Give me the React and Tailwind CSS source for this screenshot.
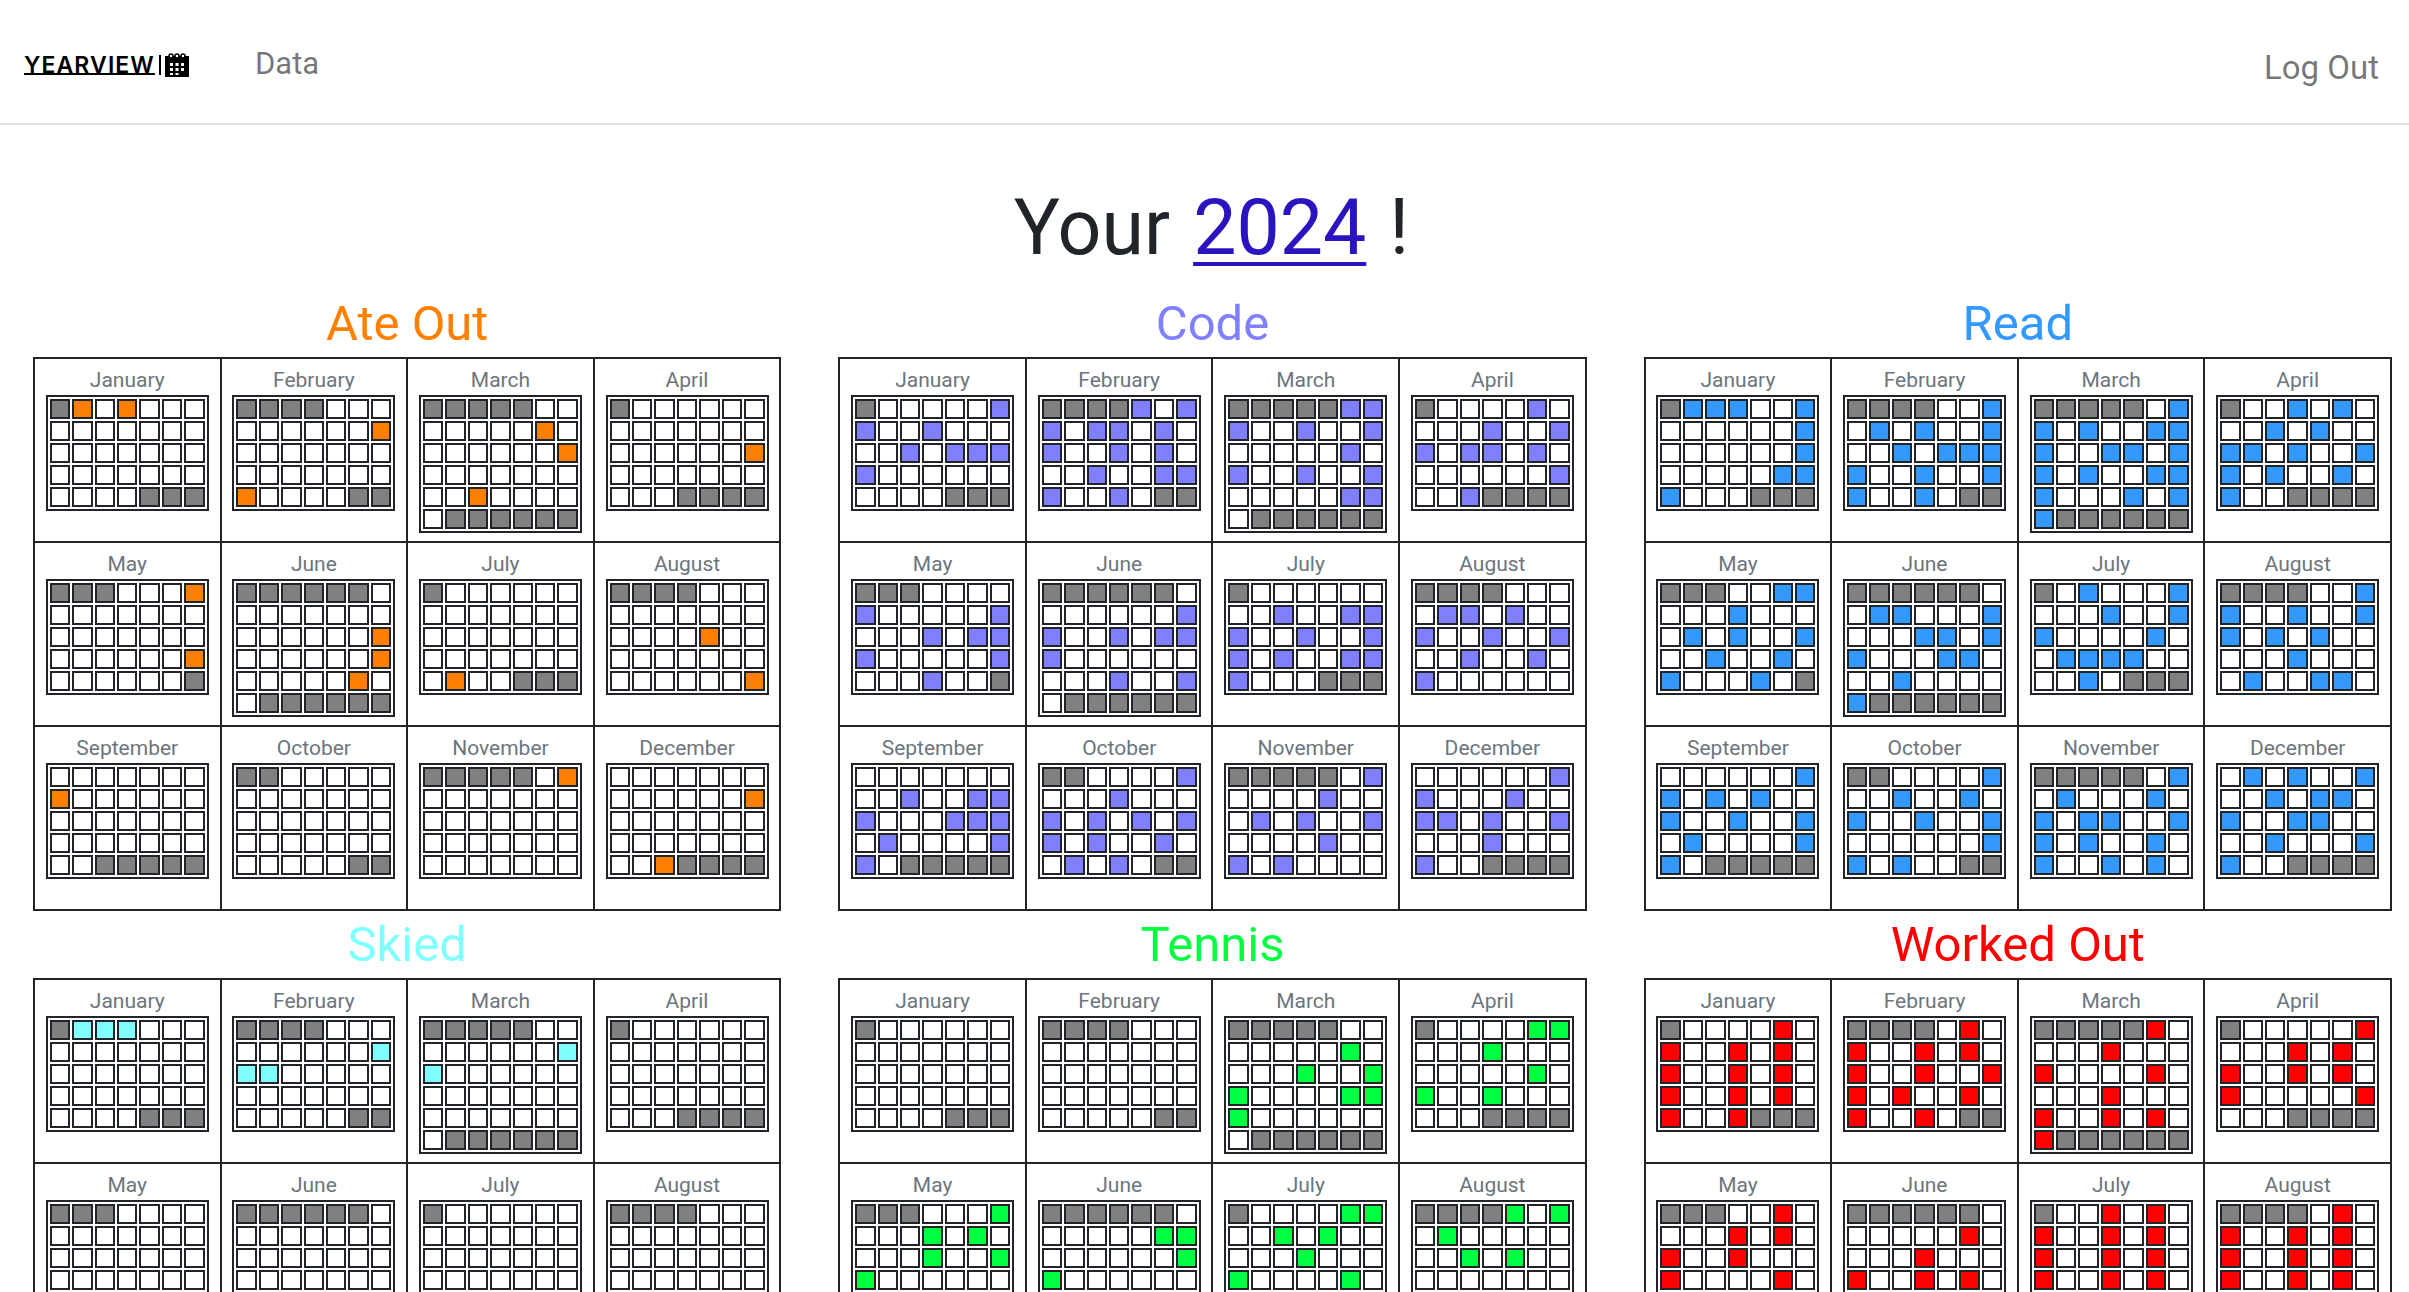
const FONT = "font-['Roboto',sans-serif]"

const MONTHS = [
  ['January', 1, 31], ['February', 4, 29], ['March', 5, 31], ['April', 1, 30],
  ['May', 3, 31], ['June', 6, 30], ['July', 1, 31], ['August', 4, 31],
  ['September', 0, 30], ['October', 2, 31], ['November', 5, 30], ['December', 0, 31],
]

// marks are written as row * 10 + col
const ACTIVITIES = [
  {
    name: 'Ate Out', title: 'text-[#ff8000]', fill: 'bg-[#ff8000]',
    marks: [[1, 3], [16, 40], [15, 26, 42], [26], [6, 36], [26, 36, 45], [41], [24, 46], [10], [], [6], [16, 42]],
  },
  {
    name: 'Code', title: 'text-[#8080ff]', fill: 'bg-[#8080ff]',
    marks: [
      [6, 10, 13, 22, 24, 25, 26, 30],
      [4, 6, 10, 12, 13, 15, 20, 23, 25, 32, 35, 36, 40, 43],
      [5, 6, 10, 13, 16, 25, 30, 33, 36, 45, 46],
      [5, 13, 16, 20, 22, 23, 25, 36, 42],
      [10, 16, 23, 25, 26, 30, 36, 43],
      [16, 20, 23, 25, 26, 30, 43, 46],
      [12, 15, 16, 20, 23, 26, 30, 32, 35, 36, 40],
      [11, 12, 14, 20, 23, 26, 32, 35, 40],
      [12, 15, 16, 20, 24, 25, 26, 31, 36, 40],
      [6, 13, 20, 22, 24, 26, 30, 32, 35, 41, 43],
      [6, 14, 21, 23, 26, 34, 40, 42],
      [6, 10, 14, 20, 21, 23, 26, 33, 40],
    ],
  },
  {
    name: 'Read', title: 'text-[#3399ff]', fill: 'bg-[#3399ff]',
    marks: [
      [1, 2, 3, 6, 16, 26, 35, 36, 40],
      [6, 11, 13, 16, 22, 24, 25, 26, 30, 33, 36, 40, 43],
      [6, 10, 12, 15, 16, 20, 23, 24, 26, 30, 32, 35, 36, 40, 44, 46, 50],
      [3, 5, 12, 14, 20, 21, 23, 26, 30, 32, 35, 40],
      [5, 6, 13, 21, 23, 26, 32, 35, 40, 44],
      [11, 12, 16, 23, 24, 26, 30, 34, 35, 42, 50],
      [2, 6, 13, 16, 20, 25, 31, 32, 33, 34, 42],
      [6, 10, 13, 16, 20, 22, 24, 33, 41, 44, 45],
      [6, 10, 12, 14, 20, 23, 26, 31, 36, 40],
      [6, 12, 15, 20, 23, 26, 36, 40, 42],
      [6, 11, 15, 20, 22, 23, 26, 30, 32, 35, 40, 43, 45],
      [1, 3, 6, 12, 14, 15, 20, 23, 24, 32, 36, 40],
    ],
  },
  {
    name: 'Skied', title: 'text-[#80ffff]', fill: 'bg-[#80ffff]',
    marks: [[1, 2, 3], [16, 20, 21], [16, 20], [], [], [], [], []],
  },
  {
    name: 'Tennis', title: 'text-[#00ff40]', fill: 'bg-[#00ff40]',
    marks: [
      [], [],
      [15, 23, 26, 30, 35, 36, 40],
      [5, 6, 13, 25, 30, 33],
      [6, 13, 15, 23, 26, 30],
      [15, 16, 26, 30],
      [5, 6, 12, 14, 23, 30, 35],
      [4, 6, 11, 22, 24],
    ],
  },
  {
    name: 'Worked Out', title: 'text-[#ff0000]', fill: 'bg-[#ff0000]',
    marks: [
      [5, 10, 13, 15, 20, 23, 25, 30, 33, 35, 40, 43],
      [5, 10, 13, 15, 20, 23, 26, 30, 32, 35, 40, 43],
      [5, 13, 20, 25, 33, 40, 43, 45, 50],
      [6, 13, 15, 20, 23, 25, 30, 36],
      [5, 13, 15, 20, 23, 30, 35],
      [15, 23, 30, 33, 35],
      [3, 5, 10, 13, 15, 20, 23, 25, 30, 33, 35],
      [5, 10, 13, 15, 20, 23, 25, 30, 33, 35],
    ],
  },
]

function Month({ month, marks, fill }){
  const [label, offset, days] = month
  const rows = Math.ceil((offset + days) / 7)
  return (
    <td className="h-[184px] border-2 border-[#212529] p-2 align-top">
      <div className="h-7 text-center text-[21px] leading-[26px] text-[#6c757d]">{label}</div>
      <table className="mx-auto w-[163px] table-fixed border-separate border-spacing-[2px] border-2 border-[#212529]">
        <tbody>
          {Array.from({ length: rows }, (_, r) => (
            <tr key={r}>
              {Array.from({ length: 7 }, (_, c) => {
                const index = r * 7 + c
                const outside = index < offset || index >= offset + days
                const bg = outside ? 'bg-[#808080]' : marks.includes(r * 10 + c) ? fill : 'bg-white'
                return <td key={c} className={`h-5 border-2 border-[#212529] p-0 ${bg}`} />
              })}
            </tr>
          ))}
        </tbody>
      </table>
    </td>
  )
}

function Activity({ activity }){
  const starts = [0, 4, 8].filter((start) => start < activity.marks.length)
  const rows = starts.map((start) => MONTHS.slice(start, start + 4).map((m, i) => [m, activity.marks[start + i]]))
  return (
    <div>
      <h2 className={`mb-[9px] h-[58px] text-center text-[49px] leading-[68px] ${activity.title}`}>{activity.name}</h2>
      <table className="w-full table-fixed border-collapse">
        <tbody>
          {rows.map((row, i) => (
            <tr key={i}>
              {row.map(([m, marks]) => <Month key={m[0]} month={m} marks={marks} fill={activity.fill} />)}
            </tr>
          ))}
        </tbody>
      </table>
    </div>
  )
}

function Logo(){
  return (
    <div className="flex items-center">
      <span className="font-['Inter',sans-serif] text-[23px] font-semibold leading-[24px] tracking-[1.1px] text-black underline decoration-[2px] underline-offset-[0px] [text-decoration-skip-ink:none]">YEARVIEW</span>
      <span className="ml-[4px] h-[20px] w-[2px] bg-black" />
      <svg className="ml-[4px]" width="24" height="24" viewBox="0 0 24 24">
        <path d="M0 3h24v21H0z" fill="#000" />
        <g fill="#fff" stroke="#000" strokeWidth="1.5">
          <circle cx="6" cy="3" r="2" />
          <circle cx="12" cy="3" r="2" />
          <circle cx="18" cy="3" r="2" />
        </g>
        <path d="M5 10h3v3H5zM10.5 10h3v3h-3zM16 10h3v3h-3zM5 15h3v3H5zM10.5 15h3v3h-3zM16 15h3v3h-3zM5 20h3v2H5zM10.5 20h3v2h-3z" fill="#fff" />
      </svg>
    </div>
  )
}

export default function App(){
  return (
    <div className={`h-screen overflow-hidden bg-white text-[#212529] ${FONT}`}>
      <nav className="flex h-[125px] items-center border-b-2 border-[#dee2e6] pl-6 pr-[30px] pt-[6px]">
        <Logo />
        <a className="ml-[66px] text-[31px] text-[rgba(0,0,0,0.55)]">Data</a>
        <a className="ml-auto mt-[7px] text-[33px] text-[rgba(0,0,0,0.55)]">Log Out</a>
      </nav>
      <h1 className="mb-[19px] mt-[60px] pl-[14px] text-center text-[77px] leading-[86px] [word-spacing:4px]">
        Your <a className="text-[#2a14c0] underline decoration-[4px] underline-offset-[8px]">2024</a> !
      </h1>
      <div className="grid grid-cols-3 gap-x-[57px] pl-[33px] pr-[17px]">
        {ACTIVITIES.map((a) => <Activity key={a.name} activity={a} />)}
      </div>
    </div>
  )
}
